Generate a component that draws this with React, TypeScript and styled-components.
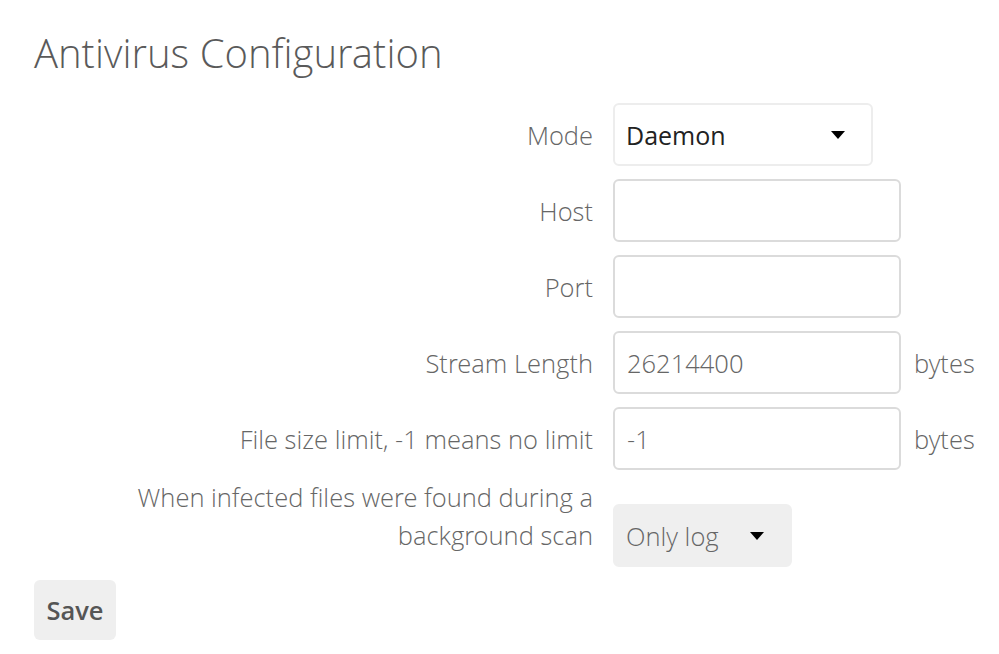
import React from "react";
import styled, { createGlobalStyle } from "styled-components";

const LIGHT = `"Open Sans Light", "Open Sans", "Noto Sans", sans-serif`;

const Global = createGlobalStyle`
  html, body { margin: 0; padding: 0; background: #fff; }
  body { font-family: "Open Sans", "Noto Sans", sans-serif; color: #555; }
  * { box-sizing: border-box; }
`;

const Page = styled.div`
  padding: 0 34px;
`;

const Title = styled.h2`
  margin: 0;
  padding-top: 25px;
  font-family: ${LIGHT};
  font-size: 40px;
  font-weight: 300;
  line-height: 56px;
  color: #5a5a5a;
`;

const Form = styled.form`
  display: flex;
  flex-direction: column;
  gap: 13px;
  margin-top: 22px;
`;

const Row = styled.div<{ $top?: boolean }>`
  display: grid;
  grid-template-columns: 559px auto auto;
  column-gap: 20px;
  align-items: ${(p) => (p.$top ? "start" : "center")};
`;

const Label = styled.label<{ $multi?: boolean }>`
  text-align: right;
  font-family: ${LIGHT};
  font-size: 25.5px;
  font-weight: 300;
  line-height: ${(p) => (p.$multi ? 38 : 36)}px;
  margin-top: ${(p) => (p.$multi ? -5 : 0)}px;
  color: #666;
`;

const Control = styled.div`
  display: flex;
  align-items: center;
  gap: 13px;
`;

const Input = styled.input`
  width: 288px;
  height: 63px;
  border: 2px solid #dbdbdb;
  border-radius: 6px;
  padding: 0 12px;
  font-family: ${LIGHT};
  font-size: 25.5px;
  font-weight: 300;
  color: #666;
  background: #fff;
  outline: none;
`;

const Unit = styled.span`
  font-family: ${LIGHT};
  font-size: 25.5px;
  font-weight: 300;
  color: #666;
`;

const Select = styled.div<{ $w: number; $grey?: boolean; $mt?: number }>`
  width: ${(p) => p.$w}px;
  height: 63px;
  margin-top: ${(p) => p.$mt ?? 0}px;
  display: flex;
  align-items: center;
  justify-content: space-between;
  padding: 0 26px 0 11px;
  border-radius: 6px;
  border: 2px solid ${(p) => (p.$grey ? "#efefef" : "#ededed")};
  background: ${(p) => (p.$grey ? "#efefef" : "#fff")};
  font-family: ${(p) => (p.$grey ? LIGHT : `"Open Sans", sans-serif`)};
  font-size: ${(p) => (p.$grey ? 25.5 : 25)}px;
  font-weight: ${(p) => (p.$grey ? 300 : 400)};
  color: ${(p) => (p.$grey ? "#666" : "#222")};
`;

const Arrow = () => (
  <svg width="14" height="8" viewBox="0 0 14 8">
    <path d="M0 0 L14 0 L7 8 Z" fill="#000" />
  </svg>
);

const Save = styled.button`
  align-self: flex-start;
  width: 82px;
  height: 60px;
  border: none;
  border-radius: 6px;
  background: #efefef;
  font-family: "Open Sans", sans-serif;
  font-size: 25.5px;
  font-weight: 600;
  color: #555;
  padding: 0;
`;

export default function App() {
  return (
    <>
      <Global />
      <Page>
        <Title>Antivirus Configuration</Title>
        <Form onSubmit={(e) => e.preventDefault()}>
          <Row>
            <Label>Mode</Label>
            <Control>
              <Select $w={260}>
                <span>Daemon</span>
                <Arrow />
              </Select>
            </Control>
          </Row>
          <Row>
            <Label>Host</Label>
            <Control>
              <Input defaultValue="" />
            </Control>
          </Row>
          <Row>
            <Label>Port</Label>
            <Control>
              <Input defaultValue="" />
            </Control>
          </Row>
          <Row>
            <Label>Stream Length</Label>
            <Control>
              <Input defaultValue="26214400" />
              <Unit>bytes</Unit>
            </Control>
          </Row>
          <Row>
            <Label>File size limit, -1 means no limit</Label>
            <Control>
              <Input defaultValue="-1" />
              <Unit>bytes</Unit>
            </Control>
          </Row>
          <Row $top>
            <Label $multi>
              When infected files were found during a
              <br />
              background scan
            </Label>
            <Control>
              <Select $w={179} $grey $mt={21}>
                <span>Only log</span>
                <Arrow />
              </Select>
            </Control>
          </Row>
          <Save type="button">Save</Save>
        </Form>
      </Page>
    </>
  );
}
